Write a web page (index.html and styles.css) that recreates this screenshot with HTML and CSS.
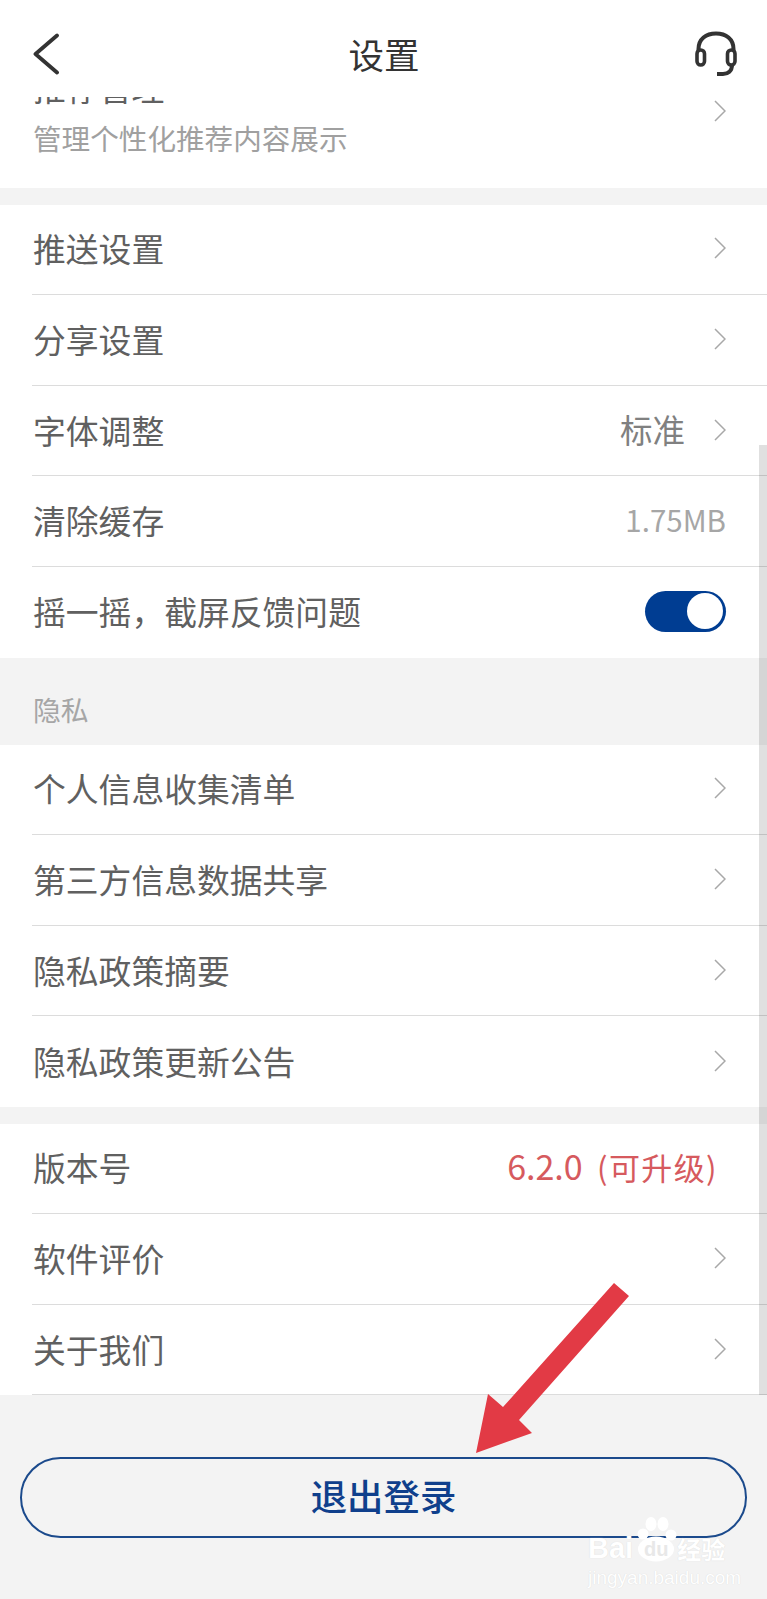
FILE: index.html
```html
<!DOCTYPE html>
<html lang="zh-CN">

    <head>

        <meta charset="UTF-8">
        <meta name="viewport" content="width=device-width, initial-scale=1.0">
        <title>设置</title>

        <link rel="stylesheet" href="styles.css">

    </head>

    <body>

        <header class="topbar">
            <svg class="back-icon" viewBox="0 0 28 42" width="28" height="42">
                <path d="M25 2.5 L3.5 21 L25 39.5" fill="none" stroke="#333" stroke-width="3.8" stroke-linecap="round" stroke-linejoin="round"/>
            </svg>
            <h1 class="topbar-title">设置</h1>
            <svg class="service-icon" viewBox="0 0 44 46" width="44" height="46">
                <path d="M4.5 20 V18 C4.5 8 12 2.5 22 2.5 C32 2.5 39.5 8 39.5 18 V20" fill="none" stroke="#333" stroke-width="4"/>
                <rect x="3" y="19" width="7.5" height="15" rx="3.7" fill="none" stroke="#333" stroke-width="3.6"/>
                <rect x="33.5" y="19" width="7.5" height="15" rx="3.7" fill="none" stroke="#333" stroke-width="3.6"/>
                <path d="M38 34 C38 40 34 43 29 43 H23" fill="none" stroke="#333" stroke-width="4"/>
            </svg>
        </header>

        <main class="settings">

            <section class="group first-group">
                <div class="row row-tall">
                    <div class="row-text">
                        <div class="row-label">推荐管理</div>
                        <div class="row-desc">管理个性化推荐内容展示</div>
                    </div>
                    <svg class="chevron" viewBox="0 0 12 22"><path d="M1 1 L11 11 L1 21"/></svg>
                </div>
            </section>

            <div class="band"></div>

            <section class="group">
                <div class="row line">
                    <div class="row-label">推送设置</div>
                    <svg class="chevron" viewBox="0 0 12 22"><path d="M1 1 L11 11 L1 21"/></svg>
                </div>
                <div class="row line">
                    <div class="row-label">分享设置</div>
                    <svg class="chevron" viewBox="0 0 12 22"><path d="M1 1 L11 11 L1 21"/></svg>
                </div>
                <div class="row line">
                    <div class="row-label">字体调整</div>
                    <div class="row-value">标准</div>
                    <svg class="chevron" viewBox="0 0 12 22"><path d="M1 1 L11 11 L1 21"/></svg>
                </div>
                <div class="row line">
                    <div class="row-label">清除缓存</div>
                    <div class="row-size">1.75MB</div>
                </div>
                <div class="row">
                    <div class="row-label">摇一摇，截屏反馈问题</div>
                    <div class="switch"><span class="switch-knob"></span></div>
                </div>
            </section>

            <div class="section-title">隐私</div>

            <section class="group">
                <div class="row line">
                    <div class="row-label">个人信息收集清单</div>
                    <svg class="chevron" viewBox="0 0 12 22"><path d="M1 1 L11 11 L1 21"/></svg>
                </div>
                <div class="row line">
                    <div class="row-label">第三方信息数据共享</div>
                    <svg class="chevron" viewBox="0 0 12 22"><path d="M1 1 L11 11 L1 21"/></svg>
                </div>
                <div class="row line">
                    <div class="row-label">隐私政策摘要</div>
                    <svg class="chevron" viewBox="0 0 12 22"><path d="M1 1 L11 11 L1 21"/></svg>
                </div>
                <div class="row">
                    <div class="row-label">隐私政策更新公告</div>
                    <svg class="chevron" viewBox="0 0 12 22"><path d="M1 1 L11 11 L1 21"/></svg>
                </div>
            </section>

            <div class="band"></div>

            <section class="group">
                <div class="row line">
                    <div class="row-label">版本号</div>
                    <div class="row-version"><span class="version-number">6.2.0</span> (可升级)</div>
                </div>
                <div class="row line">
                    <div class="row-label">软件评价</div>
                    <svg class="chevron" viewBox="0 0 12 22"><path d="M1 1 L11 11 L1 21"/></svg>
                </div>
                <div class="row line">
                    <div class="row-label">关于我们</div>
                    <svg class="chevron" viewBox="0 0 12 22"><path d="M1 1 L11 11 L1 21"/></svg>
                </div>
            </section>

            <div class="footer">
                <button class="logout">退出登录</button>
            </div>

        </main>

        <div class="scrollbar"></div>

        <svg class="red-arrow" viewBox="0 0 767 1599" width="767" height="1599">
            <polygon points="614,1283 629,1296 519,1420 532,1433 476,1453 488,1394 503,1407" fill="#e23a45"/>
        </svg>

        <div class="watermark">
            <div class="watermark-logo">
                <span>Bai</span>
                <span class="watermark-paw">
                    <svg class="paw" viewBox="0 0 44 46" width="44" height="46">
                        <circle cx="9" cy="18" r="5.5"/>
                        <ellipse cx="17" cy="8" rx="5.5" ry="7"/>
                        <ellipse cx="29" cy="8" rx="5.5" ry="7"/>
                        <circle cx="37" cy="19" r="5.5"/>
                        <ellipse cx="22" cy="33" rx="18" ry="12.5"/>
                    </svg>
                    <span class="watermark-du">du</span>
                </span>
                <span class="watermark-cn">经验</span>
            </div>
            <div class="watermark-url">jingyan.baidu.com</div>
        </div>

    </body>

</html>
```

FILE: styles.css
```css
* 
    {
        margin: 0;
        padding: 0;
        box-sizing: border-box;
    }

body 
    {
        position: relative;
        width: 767px;
        height: 1599px;
        overflow: hidden;
        background-color: #f3f3f3;
        font-family: "Noto Sans CJK SC", "Noto Sans", sans-serif;
    }

.topbar 
    {
        position: relative;
        z-index: 2;
        display: grid;
        grid-template-columns: 1fr auto 1fr;
        align-items: center;
        height: 97px;
        padding: 10px 29px 0 32px;
        background-color: #fff;
    }

.service-icon 
    {
        justify-self: end;
    }

.topbar-title 
    {
        margin-left: -2px;
        font-size: 35.5px;
        font-weight: 400;
        color: #333;
    }

.settings 
    {
        height: 1502px;
    }

.group 
    {
        background-color: #fff;
    }

.first-group 
    {
        display: flow-root;
        height: 91px;
    }

.band 
    {
        height: 16.6px;
    }

.row 
    {
        display: flex;
        align-items: center;
        height: 90.6px;
        margin-left: 32px;
        padding-right: 41px;
        padding-bottom: 2px;
        background-color: #fff;
    }

.row-tall 
    {
        height: 152px;
        margin-top: -61px;
    }

.line 
    {
        border-bottom: 1px solid #dcdcdc;
    }

.row-text 
    {
        flex: 1;
    }

.row-label 
    {
        flex: 1;
        padding-left: 1px;
        font-size: 32.8px;
        line-height: 44px;
        color: #606060;
    }

.row-desc 
    {
        margin-top: 9px;
        padding-left: 1px;
        font-size: 28.6px;
        line-height: 40px;
        color: #a0a0a0;
    }

.chevron 
    {
        width: 12px;
        height: 22px;
        fill: none;
        stroke: #a8a8a8;
        stroke-width: 1.5;
    }

.row-value 
    {
        margin-right: 29px;
        margin-bottom: 2px;
        font-size: 32.5px;
        color: #808080;
    }

.row-size 
    {
        margin-bottom: 2px;
        font-size: 29.5px;
        color: #a6a6a6;
    }

.row-version 
    {
        margin-right: 8px;
        margin-bottom: 3px;
        font-size: 31px;
        letter-spacing: 1.4px;
        word-spacing: 6px;
        color: #d65a5e;
    }

.version-number 
    {
        font-size: 34px;
        letter-spacing: 0;
    }

.switch 
    {
        display: flex;
        justify-content: flex-end;
        align-items: center;
        width: 81px;
        height: 41px;
        padding-right: 3px;
        border-radius: 21px;
        background-color: #003d92;
    }

.switch-knob 
    {
        width: 36px;
        height: 36px;
        border-radius: 50%;
        background-color: #fff;
    }

.section-title 
    {
        display: flex;
        align-items: center;
        height: 87px;
        padding: 16px 0 0 33px;
        font-size: 27.8px;
        color: #a6a6a6;
    }

.footer 
    {
        padding: 62px 20px 0;
    }

.logout 
    {
        display: block;
        width: 100%;
        height: 81px;
        padding-bottom: 5px;
        border: 2px solid #1b4a8c;
        border-radius: 41px;
        background-color: transparent;
        font-family: inherit;
        font-size: 36.4px;
        font-weight: 500;
        color: #0f3f8c;
    }

/* barra de scroll encima de la lista */
.scrollbar 
    {
        position: absolute;
        top: 445px;
        right: 0;
        width: 8px;
        height: 950px;
        background-color: rgba(0, 0, 0, 0.12);
    }

.red-arrow 
    {
        position: absolute;
        top: 0;
        left: 0;
    }

.watermark 
    {
        position: absolute;
        top: 1532px;
        left: 588px;
        width: 138px;
        color: #fff;
    }

.watermark-logo 
    {
        display: flex;
        align-items: center;
        height: 32px;
        font-family: "Liberation Sans", sans-serif;
        font-size: 29px;
        font-weight: 700;
        white-space: nowrap;
        text-shadow: 0 0 1px #d4d4d4;
    }

.watermark-paw 
    {
        position: relative;
        display: flex;
        justify-content: center;
        width: 40px;
        margin: 0 0 0 3px;
    }

.paw 
    {
        position: absolute;
        top: -20px;
        left: -2px;
        fill: #fff;
    }

.watermark-du 
    {
        position: relative;
        margin-top: 2px;
        font-size: 20px;
        color: #e8e8e8;
        text-shadow: none;
    }

.watermark-cn 
    {
        margin-left: 1px;
        font-family: "Noto Sans CJK SC", sans-serif;
        font-size: 24px;
        font-weight: 700;
    }

.watermark-url 
    {
        margin-top: 2px;
        font-family: "Liberation Sans", sans-serif;
        font-size: 19px;
        line-height: 24px;
        white-space: nowrap;
        text-shadow: 0 0 1px #d4d4d4;
    }
```
